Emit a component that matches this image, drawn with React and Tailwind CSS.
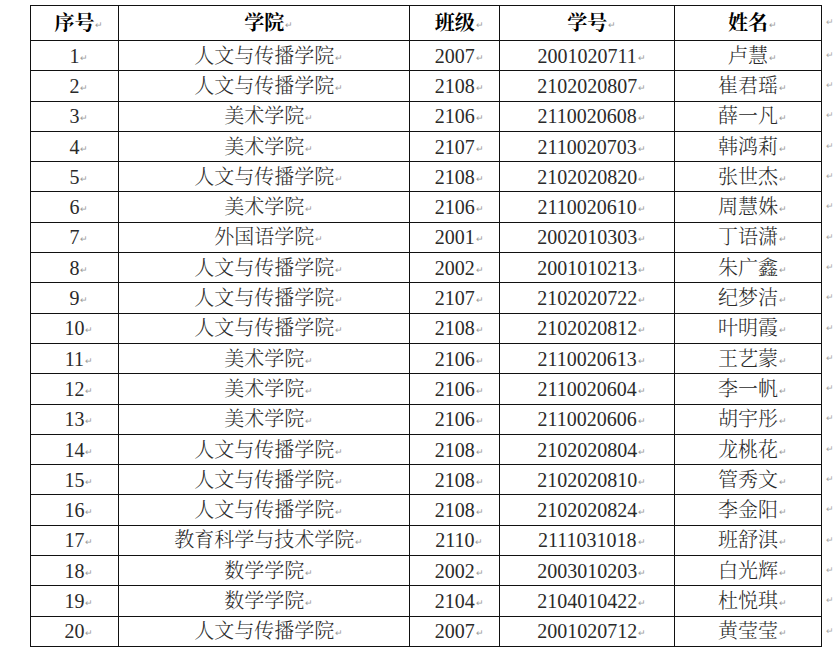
const rows = [
  ['1', '人文与传播学院', '2007', '2001020711', '卢慧'],
  ['2', '人文与传播学院', '2108', '2102020807', '崔君瑶'],
  ['3', '美术学院', '2106', '2110020608', '薛一凡'],
  ['4', '美术学院', '2107', '2110020703', '韩鸿莉'],
  ['5', '人文与传播学院', '2108', '2102020820', '张世杰'],
  ['6', '美术学院', '2106', '2110020610', '周慧姝'],
  ['7', '外国语学院', '2001', '2002010303', '丁语潇'],
  ['8', '人文与传播学院', '2002', '2001010213', '朱广鑫'],
  ['9', '人文与传播学院', '2107', '2102020722', '纪梦洁'],
  ['10', '人文与传播学院', '2108', '2102020812', '叶明霞'],
  ['11', '美术学院', '2106', '2110020613', '王艺蒙'],
  ['12', '美术学院', '2106', '2110020604', '李一帆'],
  ['13', '美术学院', '2106', '2110020606', '胡宇彤'],
  ['14', '人文与传播学院', '2108', '2102020804', '龙桃花'],
  ['15', '人文与传播学院', '2108', '2102020810', '管秀文'],
  ['16', '人文与传播学院', '2108', '2102020824', '李金阳'],
  ['17', '教育科学与技术学院', '2110', '2111031018', '班舒淇'],
  ['18', '数学学院', '2002', '2003010203', '白光辉'],
  ['19', '数学学院', '2104', '2104010422', '杜悦琪'],
  ['20', '人文与传播学院', '2007', '2001020712', '黄莹莹'],
];

const headers = ['序号', '学院', '班级', '学号', '姓名'];

// paragraph mark drawn after text, not counted in centering
function Cell({ children }) {
  return (
    <span className="relative inline-block">
      {children}
      <span className="absolute left-full bottom-[3px] ml-[1px] text-[9px] leading-none font-normal text-[#9a9a9a]">↵</span>
    </span>
  );
}

export default function App() {
  return (
    <div
      className="w-[834px] h-[652px] bg-white pl-[30px] pt-[5px] overflow-hidden"
      style={{ fontFamily: '"Liberation Serif", "Noto Serif CJK SC", "Noto Sans CJK SC", serif' }}
    >
      <table className="border-collapse table-fixed text-[20px] text-[#2a2a2a]">
        <colgroup>
          <col className="w-[88px]" />
          <col className="w-[292px]" />
          <col className="w-[90px]" />
          <col className="w-[175px]" />
          <col className="w-[147px]" />
          <col className="w-[12px]" />
        </colgroup>
        <thead>
          <tr className="h-[35px]">
            {headers.map((h) => (
              <th key={h} className="border border-[#111] p-0 text-center font-bold text-black leading-none">
                <Cell>{h}</Cell>
              </th>
            ))}
            <td className="p-0 pl-[4px] text-[9px] text-[#aaa] align-middle">↵</td>
          </tr>
        </thead>
        <tbody>
          {rows.map((r) => (
            <tr key={r[0]} className="h-[30.3px]">
              {r.map((c, i) => (
                <td key={i} className="border border-[#111] p-0 text-center leading-none font-light">
                  <Cell>{c}</Cell>
                </td>
              ))}
              <td className="p-0 pl-[4px] text-[9px] text-[#aaa] align-middle">↵</td>
            </tr>
          ))}
        </tbody>
      </table>
    </div>
  );
}
